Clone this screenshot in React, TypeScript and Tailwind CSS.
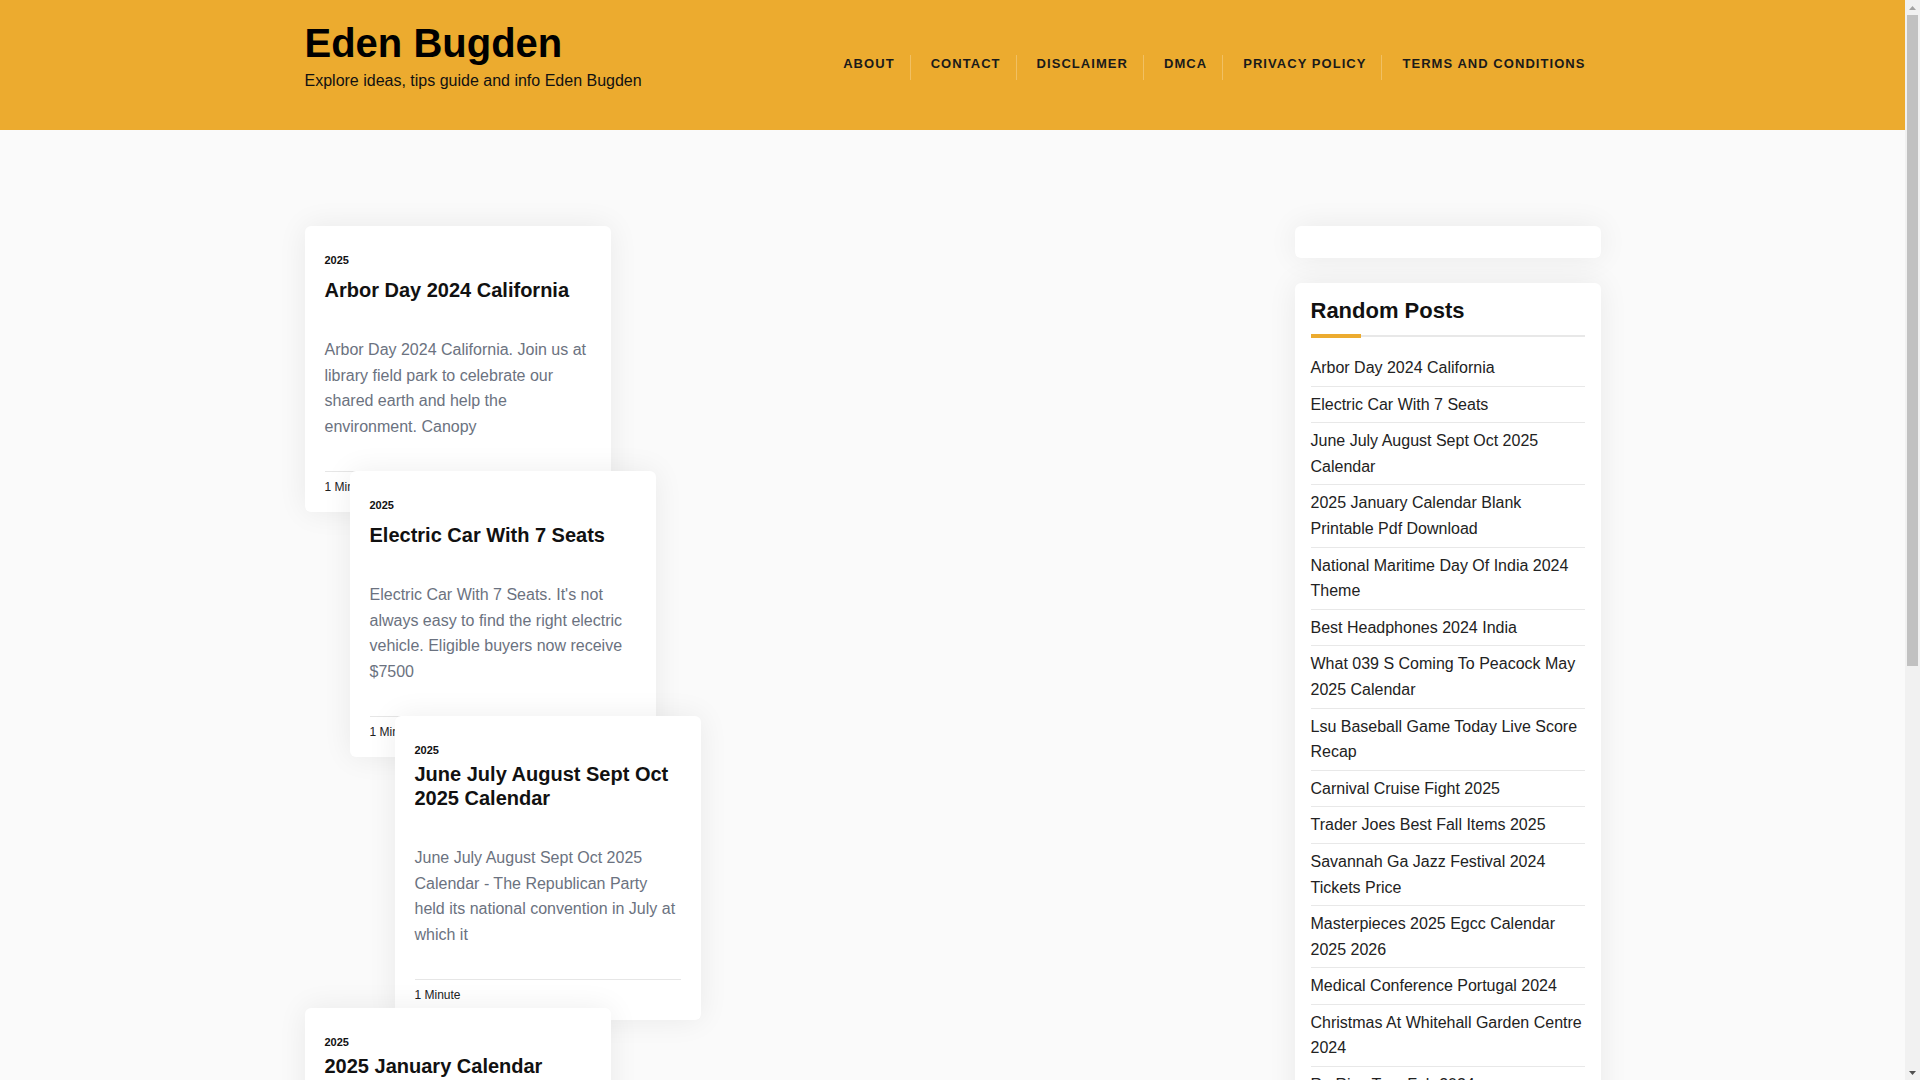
import React from 'react';

interface Post {
  title: string;
  excerpt: string;
  tight?: boolean;
}

const navItems = ['About', 'Contact', 'Disclaimer', 'DMCA', 'Privacy Policy', 'Terms and Conditions'];

const posts: Post[] = [
  {
    title: 'Arbor Day 2024 California',
    excerpt:
      'Arbor Day 2024 California. Join us at library field park to celebrate our shared earth and help the environment. Canopy',
  },
  {
    title: 'Electric Car With 7 Seats',
    excerpt:
      "Electric Car With 7 Seats. It's not always easy to find the right electric vehicle. Eligible buyers now receive $7500",
  },
  {
    title: 'June July August Sept Oct 2025 Calendar',
    excerpt:
      'June July August Sept Oct 2025 Calendar - The Republican Party held its national convention in July at which it',
    tight: true,
  },
  {
    title: '2025 January Calendar Blank Printable Pdf Download',
    excerpt:
      '2025 January Calendar Blank Printable Pdf Download. Free printable blank calendar for january 2025 in pdf',
    tight: true,
  },
];

// slot heights reproduce the staggered, overlapping card stack
const slots = [
  { h: 'h-[245px]', ml: 'ml-0' },
  { h: 'h-[245px]', ml: 'ml-[45px]' },
  { h: 'h-[292px]', ml: 'ml-[90px]' },
  { h: 'h-auto', ml: 'ml-0' },
];

const randomPosts = [
  'Arbor Day 2024 California',
  'Electric Car With 7 Seats',
  'June July August Sept Oct 2025 Calendar',
  '2025 January Calendar Blank Printable Pdf Download',
  'National Maritime Day Of India 2024 Theme',
  'Best Headphones 2024 India',
  'What 039 S Coming To Peacock May 2025 Calendar',
  'Lsu Baseball Game Today Live Score Recap',
  'Carnival Cruise Fight 2025',
  'Trader Joes Best Fall Items 2025',
  'Savannah Ga Jazz Festival 2024 Tickets Price',
  'Masterpieces 2025 Egcc Calendar 2025 2026',
  'Medical Conference Portugal 2024',
  'Christmas At Whitehall Garden Centre 2024',
  'Ro Rice Tour Feb 2024',
];

const PostCard: React.FC<{ post: Post }> = ({ post }) => (
  <article className="relative w-[306px] bg-white rounded-md shadow-[0_0_30px_rgba(0,0,0,0.07)] px-5 pt-[26px] pb-4">
    <div className="text-[11px] font-bold leading-4 text-[#111]">2025</div>
    <h2
      className={`${post.tight ? 'mt-[4px]' : 'mt-[10px]'} text-[20px] font-bold leading-6 text-[#111]`}
    >
      {post.title}
    </h2>
    <p className="mt-[35px] text-base leading-[1.6] text-[#6b7280]">{post.excerpt}</p>
    <div className="mt-8 border-t border-[#e6e6e6] pt-[6px] text-[12px] leading-[18px] text-[#222]">
      1 Minute
    </div>
  </article>
);

// the browser's classic scrollbar seen at the right edge of the reference
const Scrollbar: React.FC = () => (
  <div className="fixed top-0 right-0 w-[15px] h-screen bg-[#f1f1f1] flex flex-col">
    <div className="h-[15px] flex items-center justify-center">
      <svg width="7" height="4" viewBox="0 0 7 4">
        <path d="M0 4 L3.5 0 L7 4 Z" fill="#a3a3a3" />
      </svg>
    </div>
    <div className="flex-1 px-[2px]">
      <div className="h-[62%] bg-[#c1c1c1]" />
    </div>
    <div className="h-[15px] flex items-center justify-center">
      <svg width="7" height="4" viewBox="0 0 7 4">
        <path d="M0 0 L3.5 4 L7 0 Z" fill="#505050" />
      </svg>
    </div>
  </div>
);

const App: React.FC = () => {
  return (
    <div className="min-h-screen bg-[#fafafa] pr-[15px] font-['Liberation_Sans',Arial,sans-serif] text-[#111]">
      <header className="h-[130px] bg-[#ecab2f]">
        <div className="w-[1296px] mx-auto flex items-start justify-between">
          <div className="pt-[19px]">
            <h1 className="text-[40px] font-bold leading-[48px] text-black">Eden Bugden</h1>
            <p className="mt-[2px] text-base leading-6 text-[#111]">
              Explore ideas, tips guide and info Eden Bugden
            </p>
          </div>
          <nav className="pt-[55px]">
            <ul className="flex">
              {navItems.map((item, i) => (
                <li
                  key={item}
                  className={`h-[25px] pl-5 pr-[15px] ${i > 0 ? 'border-l border-white/25' : ''}`}
                >
                  <a className="block text-[13px] font-bold uppercase tracking-[1.05px] leading-[18px] text-[#1a1a1a]">
                    {item}
                  </a>
                </li>
              ))}
            </ul>
          </nav>
        </div>
      </header>

      <main className="w-[1296px] mx-auto pt-[96px] pb-16 flex items-start justify-between">
        <div className="flex flex-col">
          {posts.map((post, i) => (
            <div key={post.title} className={`${slots[i].h} ${slots[i].ml}`}>
              <PostCard post={post} />
            </div>
          ))}
        </div>

        <aside className="w-[306px]">
          <div className="h-[32px] bg-white rounded-md shadow-[0_0_30px_rgba(0,0,0,0.07)]" />
          <div className="mt-[25px] bg-white rounded-md shadow-[0_0_30px_rgba(0,0,0,0.07)] px-4 pt-[15px] pb-4">
            <h3 className="text-[22px] font-bold leading-[26px] text-[#111]">Random Posts</h3>
            <div className="mt-[10px] flex items-center">
              <div className="w-[50px] h-[4px] bg-[#ecab2f]" />
              <div className="flex-1 h-[2px] bg-[#e8e8e8]" />
            </div>
            <ul className="mt-[12px]">
              {randomPosts.map(title => (
                <li
                  key={title}
                  className="py-[5px] border-b border-[#e8e8e8] text-base leading-[1.6] text-[#222]"
                >
                  <a>{title}</a>
                </li>
              ))}
            </ul>
          </div>
        </aside>
      </main>

      <Scrollbar />
    </div>
  );
};

export default App;
